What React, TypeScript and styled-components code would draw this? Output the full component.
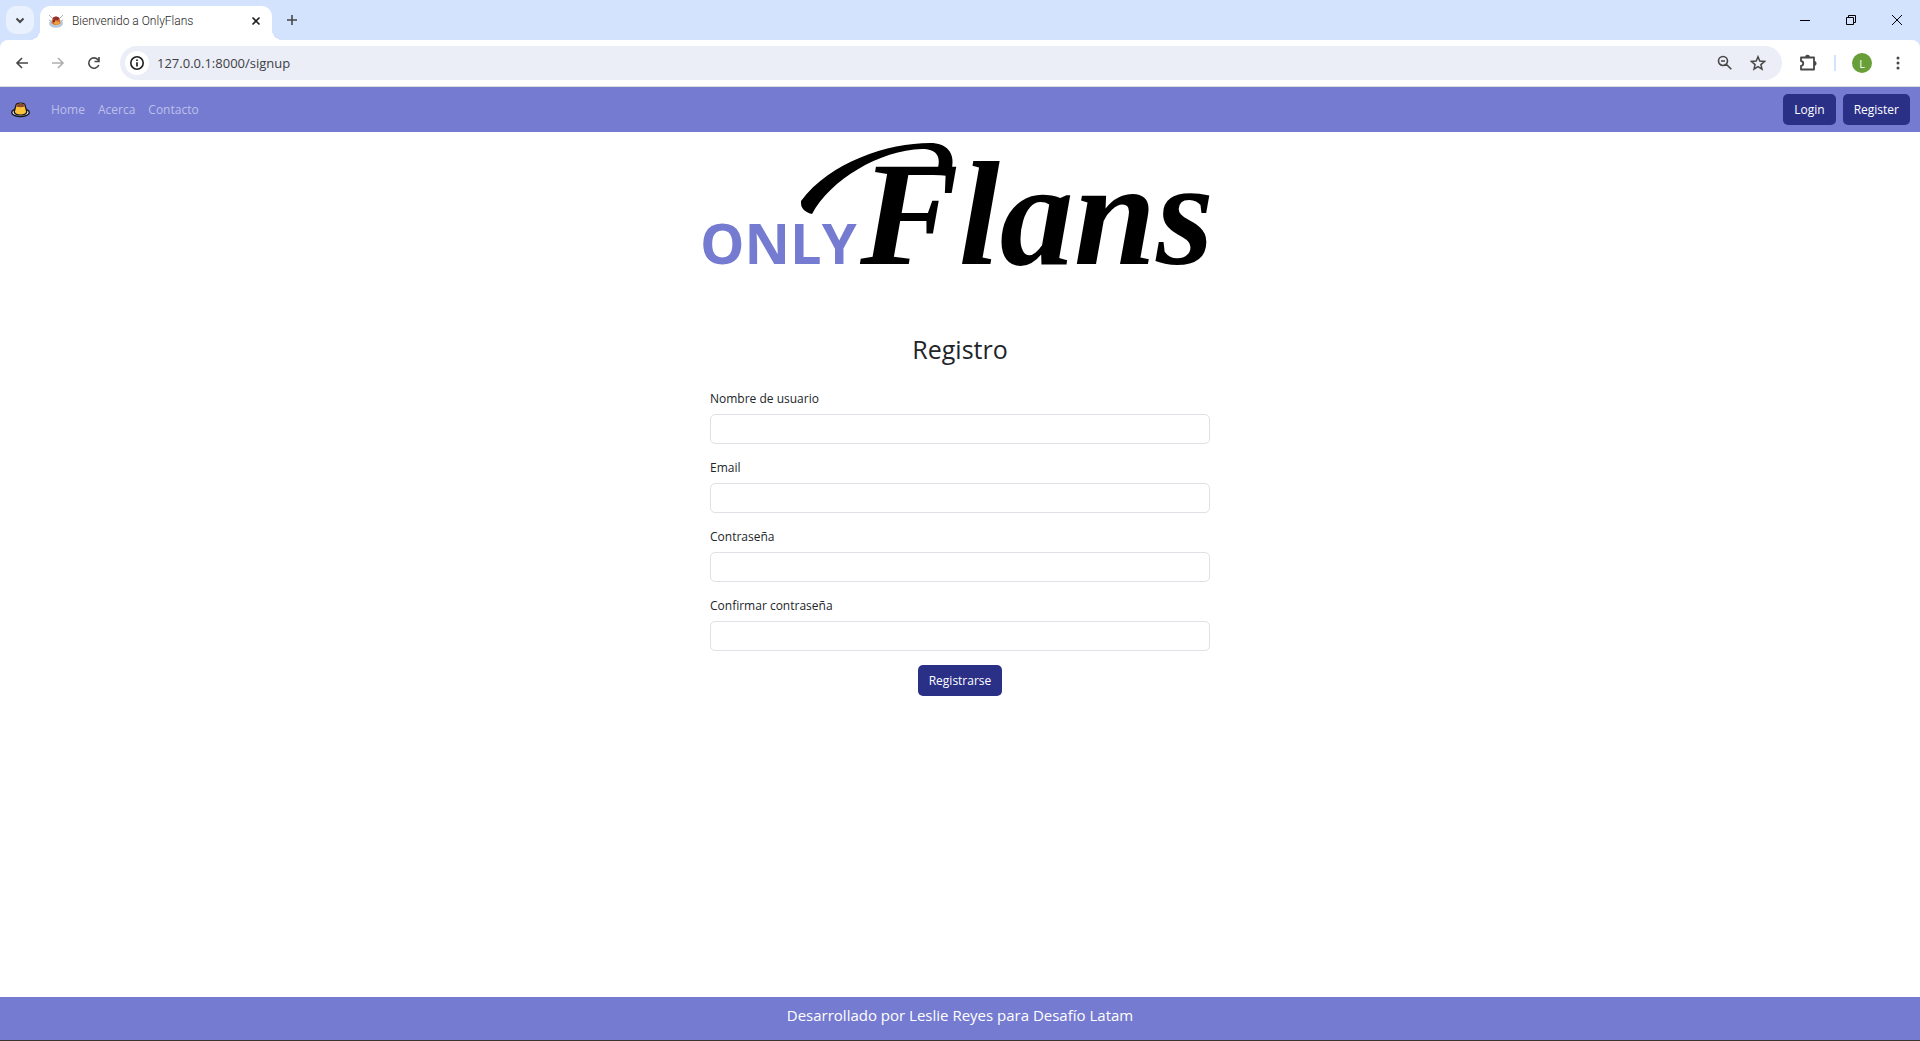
import React from "react";
import styled, { createGlobalStyle } from "styled-components";

const GlobalStyle = createGlobalStyle`
  *, *::before, *::after { box-sizing: border-box; }
  body {
    margin: 0;
    background: #ffffff;
    color: #212529;
    font-family: "Open Sans", "Noto Sans", sans-serif;
    font-size: 12px;
    line-height: 19px;
  }
  button, input { font: inherit; margin: 0; }
`;

const Window = styled.div`
  display: flex;
  flex-direction: column;
  min-height: 100vh;
`;

const TabStrip = styled.div`
  display: flex;
  align-items: flex-end;
  height: 40px;
  padding-left: 6px;
  background: #d3e3fd;
`;

const IconButton = styled.button<{ $size?: number; $tone?: string }>`
  display: flex;
  flex: none;
  align-items: center;
  justify-content: center;
  width: ${(p) => p.$size ?? 28}px;
  height: ${(p) => p.$size ?? 28}px;
  padding: 0;
  border: 0;
  border-radius: 50%;
  background: transparent;
  color: ${(p) => p.$tone ?? "#474747"};
`;

const TabSearch = styled(IconButton)`
  margin: 0 6px 6px 0;
  border-radius: 10px;
  background: #e9f1fe;
`;

const Tab = styled.div`
  position: relative;
  display: flex;
  align-items: center;
  width: 232px;
  height: 34px;
  padding: 0 6px 4px 8px;
  border-radius: 10px 10px 0 0;
  background: #ffffff;
  color: #1f1f1f;

  &::before, &::after {
    content: "";
    position: absolute;
    bottom: 0;
    width: 10px;
    height: 10px;
  }
  &::before { right: 100%; background: radial-gradient(circle at 0 0, transparent 10px, #ffffff 10px); }
  &::after { left: 100%; background: radial-gradient(circle at 100% 0, transparent 10px, #ffffff 10px); }
`;

const TabTitle = styled.span`
  flex: 1;
  margin-left: 8px;
  font-family: Roboto, sans-serif;
  font-weight: 300;
  white-space: nowrap;
`;

const NewTab = styled(IconButton)`
  margin: 0 auto 6px 6px;
`;

const WindowControls = styled.div`
  display: flex;
  align-self: stretch;
`;

const WindowControl = styled.button`
  display: flex;
  align-items: center;
  justify-content: center;
  width: 46px;
  padding: 0;
  border: 0;
  background: transparent;
  color: #000000;
`;

const ToolbarBack = styled.div`
  background: #d3e3fd;
`;

const Toolbar = styled.div`
  display: flex;
  align-items: center;
  height: 47px;
  padding: 0 8px;
  border-bottom: 1px solid #dcdcdc;
  border-radius: 8px 8px 0 0;
  background: #ffffff;
`;

const NavButtons = styled.div`
  display: flex;
  gap: 8px;
  margin-right: 12px;
`;

const AddressBar = styled.div`
  display: flex;
  flex: 1;
  align-items: center;
  height: 34px;
  padding: 0 10px 0 5px;
  border-radius: 17px;
  background: #ebeef7;
`;

const SiteInfo = styled(IconButton)`
  background: #ffffff;
  color: #1f1f1f;
`;

const Url = styled.input`
  flex: 1;
  min-width: 0;
  padding: 0 8px;
  border: 0;
  outline: 0;
  background: transparent;
  color: #3c4043;
  font-size: 13px;
`;

const AddressActions = styled.div`
  display: flex;
  gap: 5px;
`;

const ToolbarActions = styled.div`
  display: flex;
  align-items: center;
  margin-left: 12px;
`;

const Divider = styled.span`
  width: 2px;
  height: 16px;
  margin: 0 12px;
  background: #d3e3fd;
`;

const Avatar = styled.span`
  display: flex;
  align-items: center;
  justify-content: center;
  width: 20px;
  height: 20px;
  margin: 0 12px 0 4px;
  border-radius: 50%;
  background: #689f38;
  color: #ffffff;
  font-size: 11px;
`;

const Navbar = styled.nav`
  display: flex;
  align-items: center;
  height: 45px;
  padding: 0 10px;
  background: #757bd0;
`;

const Brand = styled.a`
  display: flex;
  margin-right: 21px;
`;

const NavLinks = styled.div`
  display: flex;
  flex: 1;
  gap: 13px;
`;

const NavLink = styled.a`
  color: #bdc0ec;
  text-decoration: none;
`;

const Actions = styled.div`
  display: flex;
  gap: 7px;
`;

const PrimaryButton = styled.button`
  height: 31px;
  padding: 0 11px;
  border: 0;
  border-radius: 5px;
  background: #2b3087;
  color: #ffffff;
`;

const Main = styled.main`
  display: flex;
  flex: 1;
  flex-direction: column;
  align-items: center;
  padding: 0 16px 24px;
`;

const Logo = styled.svg`
  display: block;
  width: 100%;
  max-width: 540px;
  overflow: visible;
`;

const Title = styled.h1`
  margin: 24px 0;
  font-size: 25px;
  font-weight: 500;
  line-height: 31px;
`;

const Form = styled.form`
  display: flex;
  flex-direction: column;
  align-items: center;
  gap: 14px;
  width: 100%;
  max-width: 500px;
`;

const Field = styled.div`
  display: flex;
  flex-direction: column;
  gap: 6px;
  width: 100%;
`;

const TextInput = styled.input`
  width: 100%;
  height: 30px;
  padding: 0 10px;
  border: 1px solid #dee2e6;
  border-radius: 5px;
  background: #ffffff;
`;

const Footer = styled.footer`
  height: 44px;
  padding-top: 6px;
  border-bottom: 1px solid #38342f;
  background: #757bd0;
  color: #ffffff;
  font-size: 15px;
  line-height: 24px;
  text-align: center;
`;

const FIELDS = [
  { id: "username", label: "Nombre de usuario", type: "text" },
  { id: "email", label: "Email", type: "email" },
  { id: "password", label: "Contraseña", type: "password" },
  { id: "password2", label: "Confirmar contraseña", type: "password" },
];

type LineIconProps = { d: string; size?: number; weight?: number };

function LineIcon({ d, size = 16, weight = 2 }: LineIconProps) {
  return (
    <svg width={size} height={size} viewBox="0 0 16 16" fill="none" stroke="currentColor" strokeWidth={weight} aria-hidden="true">
      <path d={d} />
    </svg>
  );
}

function Favicon() {
  return (
    <svg width="16" height="16" viewBox="0 0 16 16" aria-hidden="true">
      <ellipse cx="8" cy="10.500" rx="7" ry="4.200" fill="#b9c8d8" />
      <path d="M1 2l3 3M15 2l-3 3M1 7l2 1M15 7l-2 1" stroke="#a6b2bd" strokeWidth="1" />
      <path d="M3.500 10L4.500 5Q8 2 11.500 5L12.500 10Q8 14 3.500 10z" fill="#d9622b" />
      <path d="M4.500 5Q8 2 11.500 5L10 7H6z" fill="#8e2f31" />
      <path d="M7 8l5 1-2 3-4-1z" fill="#f0a33c" />
      <circle cx="6" cy="8" r="1" fill="#3c2831" />
    </svg>
  );
}

function Pudding() {
  return (
    <svg width="20" height="18" viewBox="0 0 20 18" aria-hidden="true">
      <ellipse cx="10.500" cy="11.500" rx="8.800" ry="4" fill="#e9edf0" stroke="#15151c" strokeWidth="1.400" />
      <path d="M4.200 11L6 4Q6.500 2 10.500 2T15 4L16.800 11Q16 14 10.500 14T4.200 11z" fill="#fdc33b" stroke="#15151c" strokeWidth="1.200" />
      <path d="M6.300 4Q7 2.500 10.500 2.500T14.700 4L14.800 5.500Q10.500 7 6.200 5.500z" fill="#8a4b30" />
    </svg>
  );
}

function OnlyFlansLogo() {
  return (
    <Logo viewBox="0 0 540 178" role="img" aria-label="OnlyFlans">
      <text x="10" y="132" fill="#757bd0" fontFamily="'Open Sans', sans-serif" fontSize="56" fontWeight="700">ONLY</text>
      {/* Flourish sweeping over the wordmark */}
      <path d="M122 82Q110 79 111 69C140 30 198 11 240 11C257 11 265 21 262 36L248 36C251 24 246 17 232 17C190 18 140 48 122 82z" fill="#000000" />
      <text x="170" y="132" fill="#000000" fontFamily="'Liberation Serif', serif" fontSize="148" fontStyle="italic" fontWeight="700">Flans</text>
    </Logo>
  );
}

function BrowserChrome() {
  return (
    <header>
      <TabStrip>
        <TabSearch aria-label="Buscar pestañas"><LineIcon d="M4.500 6.500L8 10l3.500-3.500" /></TabSearch>
        <Tab>
          <Favicon />
          <TabTitle>Bienvenido a OnlyFlans</TabTitle>
          <IconButton $size={20} $tone="#1f1f1f" aria-label="Cerrar pestaña"><LineIcon d="M4.500 4.500l7 7m0-7l-7 7" weight={1.6} /></IconButton>
        </Tab>
        <NewTab aria-label="Nueva pestaña"><LineIcon d="M8 3v10M3 8h10" weight={1.6} /></NewTab>
        <WindowControls>
          <WindowControl aria-label="Minimizar"><LineIcon d="M3 8.500h10" weight={1} /></WindowControl>
          <WindowControl aria-label="Restaurar"><LineIcon d="M3.500 5.500h7v7h-7zM5.500 5.500v-2h7v7h-2" weight={1} /></WindowControl>
          <WindowControl aria-label="Cerrar"><LineIcon d="M3 3l10 10m0-10L3 13" weight={1} /></WindowControl>
        </WindowControls>
      </TabStrip>
      <ToolbarBack>
        <Toolbar>
          <NavButtons>
            <IconButton aria-label="Atrás"><LineIcon d="M14 8H3m5-5L3 8l5 5" weight={1.6} /></IconButton>
            <IconButton $tone="#b0b0b0" aria-label="Adelante"><LineIcon d="M2 8h11M8 3l5 5-5 5" weight={1.6} /></IconButton>
            <IconButton aria-label="Recargar">
              <LineIcon d="M12.800 10A5.200 5.200 0 1 1 12.200 5M13 2v4.500H8.500" weight={1.6} />
            </IconButton>
          </NavButtons>
          <AddressBar>
            <SiteInfo $size={24} aria-label="Información del sitio">
              <svg width="16" height="16" viewBox="0 0 16 16" fill="none" stroke="currentColor" aria-hidden="true">
                <circle cx="8" cy="8" r="6.200" strokeWidth="1.600" />
                <path d="M8 7.300V11.500M8 4.500v1.600" strokeWidth="1.700" />
              </svg>
            </SiteInfo>
            <Url aria-label="Dirección" defaultValue="127.0.0.1:8000/signup" />
            <AddressActions>
              <IconButton aria-label="Zoom"><LineIcon d="M10.500 6a4.500 4.500 0 1 1-9 0a4.500 4.500 0 0 1 9 0zM9.300 9.300l5 5M4 6h4" weight={1.6} /></IconButton>
              <IconButton aria-label="Favorito"><LineIcon d="M8 1.800l1.800 4.300 4.700.4-3.600 3.100 1.100 4.600L8 11.700l-4 2.500 1.100-4.600L1.500 6.500l4.700-.4z" weight={1.5} /></IconButton>
            </AddressActions>
          </AddressBar>
          <ToolbarActions>
            <IconButton aria-label="Extensiones">
              <svg width="18" height="18" viewBox="0 0 18 18" fill="none" stroke="#474747" strokeWidth="1.800" aria-hidden="true">
                <path d="M2 3.500h13v12H2v-3.500c3-.5 3-4.500 0-5z" strokeLinejoin="round" />
                <path d="M7 3.200a1.500 1.500 0 0 1 3 0M15.200 8a1.500 1.500 0 0 1 0 3" fill="#474747" />
              </svg>
            </IconButton>
            <Divider />
            <Avatar>L</Avatar>
            <IconButton aria-label="Menú">
              <svg width="16" height="16" viewBox="0 0 16 16" fill="currentColor" aria-hidden="true">
                <circle cx="8" cy="3" r="1.500" /><circle cx="8" cy="8" r="1.500" /><circle cx="8" cy="13" r="1.500" />
              </svg>
            </IconButton>
          </ToolbarActions>
        </Toolbar>
      </ToolbarBack>
    </header>
  );
}

export default function App() {
  return (
    <Window>
      <GlobalStyle />
      <BrowserChrome />
      <Navbar>
        <Brand href="#" aria-label="OnlyFlans"><Pudding /></Brand>
        <NavLinks>
          <NavLink href="#">Home</NavLink>
          <NavLink href="#">Acerca</NavLink>
          <NavLink href="#">Contacto</NavLink>
        </NavLinks>
        <Actions>
          <PrimaryButton>Login</PrimaryButton>
          <PrimaryButton>Register</PrimaryButton>
        </Actions>
      </Navbar>
      <Main>
        <OnlyFlansLogo />
        <Title>Registro</Title>
        <Form onSubmit={(e) => e.preventDefault()}>
          {FIELDS.map((f) => (
            <Field key={f.id}>
              <label htmlFor={f.id}>{f.label}</label>
              <TextInput id={f.id} type={f.type} />
            </Field>
          ))}
          <PrimaryButton type="submit">Registrarse</PrimaryButton>
        </Form>
      </Main>
      <Footer>Desarrollado por Leslie Reyes para Desafío Latam</Footer>
    </Window>
  );
}
